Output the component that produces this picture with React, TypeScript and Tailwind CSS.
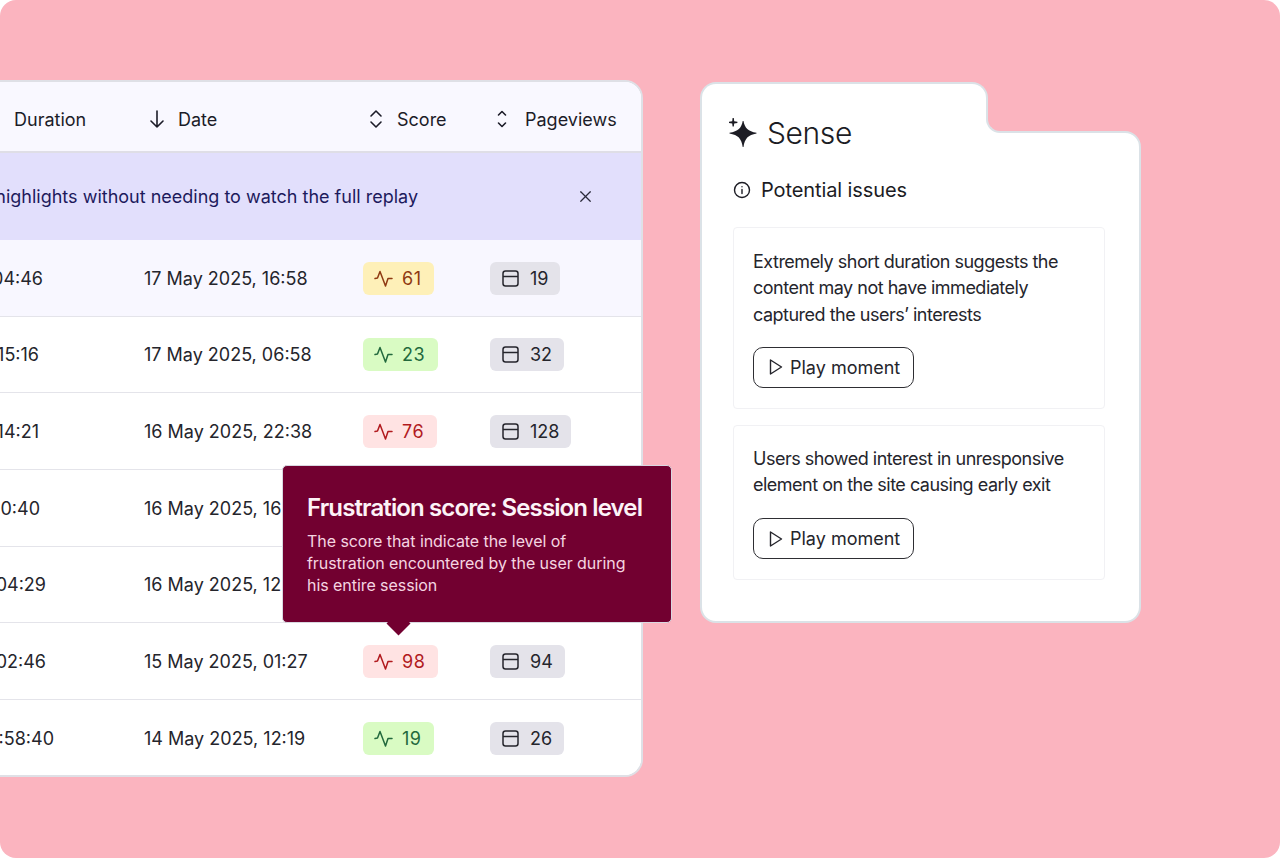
import { FC } from 'react';
import { X } from 'lucide-react';

type Tone = 'yellow' | 'green' | 'red';

const TONES: Record<Tone, string> = {
  yellow: 'bg-[#fef0b8] text-[#8f3a12]',
  green: 'bg-[#d9fbc3] text-[#22693d]',
  red: 'bg-[#ffe3e3] text-[#b11a1e]',
};

const ROWS: { duration: string; durationWidth: string; date: string; score: number; tone: Tone; pages: number; highlight?: boolean }[] = [
  { duration: '00:04:46', durationWidth: 'w-[43px]', date: '17 May 2025, 16:58', score: 61, tone: 'yellow', pages: 19, highlight: true },
  { duration: '15:16', durationWidth: 'w-[39px]', date: '17 May 2025, 06:58', score: 23, tone: 'green', pages: 32 },
  { duration: '14:21', durationWidth: 'w-[39px]', date: '16 May 2025, 22:38', score: 76, tone: 'red', pages: 128 },
  { duration: '0:40', durationWidth: 'w-[40px]', date: '16 May 2025, 16:12', score: 44, tone: 'yellow', pages: 12 },
  { duration: '00:04:29', durationWidth: 'w-[46px]', date: '16 May 2025, 12:40', score: 51, tone: 'yellow', pages: 40 },
  { duration: '00:02:46', durationWidth: 'w-[46px]', date: '15 May 2025, 01:27', score: 98, tone: 'red', pages: 94 },
  { duration: ':58:40', durationWidth: 'w-[54px]', date: '14 May 2025, 12:19', score: 19, tone: 'green', pages: 26 },
];

const PulseIcon: FC = () => (
  <svg width="19" height="19" viewBox="0 0 19 19" fill="none" stroke="currentColor" strokeWidth="1.5" strokeLinecap="round" strokeLinejoin="round" className="shrink-0">
    <path d="M1 9.5 3.5 9 6 2.5l5.5 14.5 2.5-7.5h4" />
  </svg>
);

const BrowserIcon: FC = () => (
  <svg width="17" height="17" viewBox="0 0 17 17" fill="none" stroke="currentColor" strokeWidth="1.5" className="shrink-0">
    <rect x="1" y="1" width="15" height="15" rx="2.5" />
    <path d="M1 6.5h15" />
  </svg>
);

const SortIcon: FC = () => (
  <svg width="14" height="20" viewBox="0 0 14 20" fill="none" stroke="#1c1c28" strokeWidth="1.6" strokeLinecap="round" strokeLinejoin="round" className="shrink-0">
    <path d="M2 7l5-5 5 5M2 13l5 5 5-5" />
  </svg>
);

const NarrowSortIcon: FC = () => (
  <svg width="10" height="20" viewBox="0 0 10 20" fill="none" stroke="#1c1c28" strokeWidth="1.6" strokeLinecap="round" strokeLinejoin="round" className="shrink-0">
    <path d="M1.5 6 5 2.5 8.5 6M1.5 14 5 17.5 8.5 14" />
  </svg>
);

const ArrowDownIcon: FC = () => (
  <svg width="16" height="18" viewBox="0 0 16 18" fill="none" stroke="#1c1c28" strokeWidth="1.6" strokeLinecap="round" strokeLinejoin="round" className="shrink-0">
    <path d="M8 1v16M2 11l6 6 6-6" />
  </svg>
);

const SparkleIcon: FC = () => (
  <svg width="30" height="30" viewBox="0 0 30 30" fill="#1c1c24" className="shrink-0">
    <path d="M15.5 3c1.2 7 4.6 10.4 13 11.8v.6c-8.4 1.4-11.8 5-13 13.6h-.8c-1.2-8.6-4.6-12.2-13.2-13.6v-.6c8.6-1.4 12-4.8 13.2-11.8z" />
    <path d="M4.6 0h1.2l.4 3.3 3.2.5v1.1l-3.2.5-.4 3.1H4.6l-.4-3.1L1 4.9V3.8l3.2-.5z" />
  </svg>
);

const InfoIcon: FC = () => (
  <svg width="18" height="18" viewBox="0 0 18 18" fill="none" stroke="#1c1c24" strokeWidth="1.4" strokeLinecap="round" className="shrink-0">
    <circle cx="9" cy="9" r="7.5" />
    <path d="M9 8.5v4M9 5.6v.1" />
  </svg>
);

const PlayButton: FC = () => (
  <button className="flex items-center gap-[7px] w-[161px] h-[41px] pl-[15px] rounded-[10px] border border-[#2e2e33] text-[18px] text-[#25252c]">
    <svg width="14" height="18" viewBox="0 0 14 18" fill="none" stroke="#25252c" strokeWidth="1.4" strokeLinejoin="round" className="shrink-0">
      <path d="M1.5 2v14L12.5 9z" />
    </svg>
    Play moment
  </button>
);

const TableCard: FC = () => (
  <div className="relative ml-[-20px] w-[663px] shrink-0">
    <div className="overflow-hidden rounded-[18px] border-2 border-[#dfe0e6] bg-white text-[18px] text-[#25252c]">
      <div className="flex items-center h-[71px] pt-[5px] bg-[#f9f8ff] border-b-2 border-[#dfdee6] text-[#1c1c28]">
        <div className="w-[167px] pl-[32px] shrink-0">Duration</div>
        <div className="w-[216px] shrink-0 flex items-center gap-[13px]">
          <ArrowDownIcon />
          Date
        </div>
        <div className="w-[132px] pl-[4px] shrink-0 flex items-center gap-[14px]">
          <SortIcon />
          Score
        </div>
        <div className="flex items-center gap-[18px]">
          <NarrowSortIcon />
          Pageviews
        </div>
      </div>
      <div className="flex items-center h-[87px] bg-[#e2dffc] text-[#1d1a5c]">
        <div className="w-[436px] shrink-0 flex justify-end whitespace-nowrap">
          <span>Get session highlights without needing to watch the full replay</span>
        </div>
        <X size={19} strokeWidth={1.5} className="ml-[158px] text-[#2a2a3a]" />
      </div>
      {ROWS.map((row) => (
        <div key={row.date} className={`flex items-center h-[76.67px] last:h-[75.5px] pt-[1px] border-b border-[#e4e4ea] last:border-b-0 ${row.highlight ? 'bg-[#f8f7ff]' : 'bg-white'}`}>
          <div className="w-[162px] pl-[18px] shrink-0 whitespace-nowrap">
            <div className={`flex justify-end ${row.durationWidth}`}>
              <span>{row.duration}</span>
            </div>
          </div>
          <div className="w-[219px] shrink-0 whitespace-nowrap">{row.date}</div>
          <div className="w-[127px] shrink-0">
            <span className={`inline-flex items-center gap-[9px] h-[33px] pl-[11px] pr-[13px] tracking-[0.5px] rounded-[6px] ${TONES[row.tone]}`}>
              <PulseIcon />
              {row.score}
            </span>
          </div>
          <span className="inline-flex items-center gap-[11px] h-[33px] px-[12px] rounded-[6px] bg-[#e4e3ea]">
            <BrowserIcon />
            {row.pages}
          </span>
        </div>
      ))}
    </div>

    <div className="absolute left-[302px] top-[385px] w-[390px] h-[158px] pt-[26px] pl-[24px] rounded-[5px] border border-[#d8d8e0] bg-[#720030]">
      <div className="text-[24px] leading-[32px] font-semibold tracking-[-0.88px] text-[#fdf3f7] whitespace-nowrap">Frustration score: Session level</div>
      <p className="mt-[6px] w-[325px] text-[16px] leading-[22px] tracking-[-0.06px] text-[#f5d5e1]">
        The score that indicate the level of frustration encountered by the user during his entire session
      </p>
      <div className="absolute left-[107px] bottom-[-10px] w-[17px] h-[17px] rotate-45 bg-[#720030]" />
    </div>
  </div>
);

const SenseCard: FC = () => (
  <div className="relative ml-[57px] mt-[2px] w-[441px] shrink-0 text-[#1c1c24]">
    <div className="flex h-[49px]">
      <div className="relative z-10 w-[288px] h-[51px] rounded-t-[16px] border-2 border-b-0 border-[#dbe2e7] bg-white" />
      <div className="relative flex-1">
        <div className="absolute z-20 left-[-2px] bottom-[-2px] w-[16px] h-[16px] bg-white">
          <div className="w-full h-full rounded-bl-[14px] border-b-2 border-l-2 border-[#dbe2e7] bg-[#fbb4bf]" />
        </div>
      </div>
    </div>
    <div className="h-[492px] rounded-b-[16px] rounded-tr-[16px] border-2 border-[#dbe2e7] bg-white">
      <div className="relative z-20 flex items-center gap-[9px] mt-[-20px] pl-[26px] h-[40px]">
        <SparkleIcon />
        <span className="text-[30px] font-light tracking-[-0.4px]">Sense</span>
      </div>
      <div className="flex items-center gap-[10px] mt-[22px] pl-[31px] h-[30px]">
        <InfoIcon />
        <span className="text-[20px] font-normal tracking-[-0.1px]">Potential issues</span>
      </div>
      <div className="flex flex-col gap-[16px] mt-[22px] ml-[31px] mr-[34px]">
        <div className="h-[182px] pt-[21px] pl-[19px] rounded-[4px] border border-[#f1f1f4]">
          <p className="text-[18px] leading-[25.5px] tracking-[-0.5px] text-[#25252c]">
            Extremely short duration suggests the
            <br />
            content may not have immediately
            <span className="block mt-[2px]">captured the users’ interests</span>
          </p>
          <div className="mt-[19px]">
            <PlayButton />
          </div>
        </div>
        <div className="h-[155px] pt-[20px] pl-[19px] rounded-[4px] border border-[#f1f1f4]">
          <p className="text-[18px] leading-[26px] tracking-[-0.5px] text-[#25252c]">
            Users showed interest in unresponsive
            <br />
            element on the site causing early exit
          </p>
          <div className="mt-[20px]">
            <PlayButton />
          </div>
        </div>
      </div>
    </div>
  </div>
);

const App: FC = () => (
  <div className="w-[1280px] h-[858px] bg-white font-['Inter',sans-serif]">
    <div className="flex items-start h-full pt-[80px] overflow-hidden rounded-[16px] bg-[#fbb4bf]">
      <TableCard />
      <SenseCard />
    </div>
  </div>
);

export default App;
